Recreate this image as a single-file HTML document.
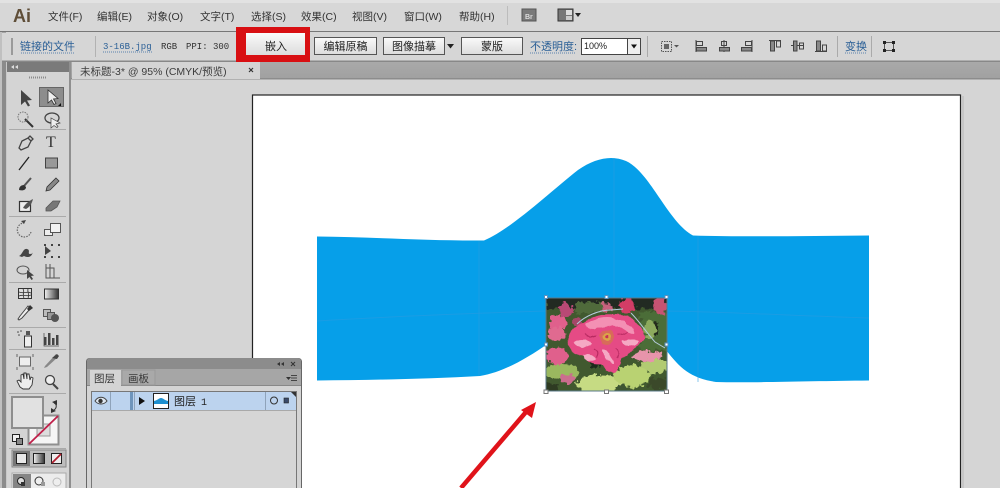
<!DOCTYPE html>
<html><head><meta charset="utf-8"><style>
html,body{margin:0;padding:0;background:#d6d6d6;overflow:hidden}
svg{display:block;font-family:"Liberation Sans","Noto Sans CJK SC",sans-serif;filter:blur(.35px)}
.m{font-size:10.5px;fill:#333}
.b{font-size:11px;fill:#222;text-anchor:middle}
.l{font-size:11px;fill:#2a5f96}
.mono{font-family:"Liberation Mono","Noto Sans CJK SC",monospace;font-size:9px;fill:#333}
.ic{fill:none;stroke:#444;stroke-width:1.3}
.f{fill:#444}
</style></head><body>
<svg width="1000" height="488" viewBox="0 0 1000 488" xmlns="http://www.w3.org/2000/svg">
<defs>
<linearGradient id="btng" x1="0" y1="0" x2="0" y2="1"><stop offset="0" stop-color="#fafafa"/><stop offset="1" stop-color="#dcdcdc"/></linearGradient>
<linearGradient id="grad" x1="0" y1="0" x2="1" y2="0"><stop offset="0" stop-color="#f4f4f4"/><stop offset="1" stop-color="#333"/></linearGradient>
<linearGradient id="tabbar" x1="0" y1="0" x2="0" y2="1"><stop offset="0" stop-color="#a9a9a9"/><stop offset="1" stop-color="#a0a0a0"/></linearGradient>
<filter id="rough" x="-5%" y="-5%" width="110%" height="110%"><feTurbulence type="fractalNoise" baseFrequency="0.22" numOctaves="2" seed="7" result="n"/><feDisplacementMap in="SourceGraphic" in2="n" scale="9" xChannelSelector="R" yChannelSelector="G"/><feGaussianBlur stdDeviation="0.35"/></filter>
<filter id="rough2" x="-5%" y="-5%" width="110%" height="110%"><feTurbulence type="fractalNoise" baseFrequency="0.12" numOctaves="2" seed="3" result="n"/><feDisplacementMap in="SourceGraphic" in2="n" scale="5" xChannelSelector="R" yChannelSelector="G"/><feGaussianBlur stdDeviation="0.3"/></filter>
<clipPath id="pic"><rect x="546" y="298" width="121" height="93"/></clipPath>
</defs>

<rect width="1000" height="488" fill="#d6d6d6"/>
<!-- top menu -->
<rect x="0" y="0" width="1000" height="3" fill="#e2e2e2"/>
<rect x="0" y="3" width="1000" height="28" fill="#d7d7d7"/>
<text x="13" y="22" font-size="18" font-weight="bold" fill="#5f4e38">Ai</text>
<g class="m">
<text x="48" y="20">文件(F)</text><text x="97" y="20">编辑(E)</text><text x="147" y="20">对象(O)</text>
<text x="200" y="20">文字(T)</text><text x="251" y="20">选择(S)</text><text x="301" y="20">效果(C)</text>
<text x="352" y="20">视图(V)</text><text x="404" y="20">窗口(W)</text><text x="459" y="20">帮助(H)</text>
</g>
<rect x="507" y="6" width="1" height="19" fill="#bcbcbc"/>
<rect x="522" y="9" width="14" height="12" fill="#7a7a7a" stroke="#555"/>
<text x="525" y="19" font-size="7" font-weight="bold" fill="#ddd">Br</text>
<rect x="558" y="9" width="15" height="12" fill="#777" stroke="#333"/>
<rect x="566" y="10" width="6" height="5" fill="#ddd"/><rect x="566" y="16" width="6" height="4" fill="#ccc"/>
<path d="M575 13h6l-3 4z" fill="#222"/>

<!-- control bar -->
<rect x="0" y="31" width="1000" height="1.500" fill="#777"/>
<rect x="6" y="32" width="994" height="29" fill="#d6d6d6"/>
<rect x="0" y="60.500" width="1000" height="1.500" fill="#888"/>
<rect x="11" y="38" width="2" height="17" fill="#9a9a9a"/>
<text x="20" y="50" class="l">链接的文件</text>
<path d="M21 53h53" stroke="#5b82ad" stroke-width="1" stroke-dasharray="1 1"/>
<rect x="95" y="36" width="1" height="21" fill="#b2b2b2"/>
<text x="103" y="49" font-size="9" fill="#2a5f96" font-family="Liberation Mono,monospace">3-16B.jpg</text>
<path d="M103 52h49" stroke="#5b82ad" stroke-dasharray="1 1"/>
<text x="161" y="49" class="mono">RGB</text>
<text x="186" y="49" class="mono">PPI: 300</text>

<rect x="236" y="27" width="74" height="35" fill="#d80f12"/>
<rect x="246" y="33" width="59" height="22" fill="url(#btng)"/>
<text x="276" y="50" class="b">嵌入</text>
<rect x="314.500" y="37.500" width="62" height="17" fill="url(#btng)" stroke="#555"/>
<text x="345.500" y="50" class="b">编辑原稿</text>
<rect x="383.500" y="37.500" width="61" height="17" fill="url(#btng)" stroke="#555"/>
<text x="414" y="50" class="b">图像描摹</text>
<path d="M447 44h7l-3.500 4.500z" fill="#222"/>
<rect x="461.500" y="37.500" width="61" height="17" fill="url(#btng)" stroke="#555"/>
<text x="492" y="50" class="b">蒙版</text>
<text x="530" y="50" class="l">不透明度:</text>
<path d="M530 53h46" stroke="#5b82ad" stroke-dasharray="1 1"/>
<rect x="581.500" y="38.500" width="46" height="16" fill="#fff" stroke="#444"/>
<text x="584" y="49" font-size="9" fill="#222">100%</text>
<rect x="627.500" y="38.500" width="13" height="16" fill="#eee" stroke="#444"/>
<path d="M631 44.500h6l-3 4z" fill="#111"/>
<rect x="647" y="36" width="1" height="21" fill="#aaa"/>
<!-- align icons -->
<rect x="661.500" y="41.500" width="10" height="10" fill="none" stroke="#555" stroke-dasharray="1.500 1"/>
<rect x="664" y="44" width="5" height="5" fill="#666"/>
<path d="M674 45h5l-2.500 2.500z" fill="#555"/>
<g fill="none" stroke="#444">
<path d="M696 40v12"/><rect x="696.500" y="41.500" width="6" height="4"/><rect x="696.500" y="47.500" width="10" height="3.500" fill="#888"/>
<path d="M724 40v12"/><rect x="721.500" y="41.500" width="5" height="4"/><rect x="719.500" y="47.500" width="10" height="3.500" fill="#888"/>
<path d="M752 40v12"/><rect x="745.500" y="41.500" width="6" height="4"/><rect x="741.500" y="47.500" width="10" height="3.500" fill="#888"/>
<path d="M769 40.500h12"/><rect x="770.500" y="41" width="4" height="10" fill="#888"/><rect x="776.500" y="41" width="4" height="6"/>
<path d="M791 45.500h13"/><rect x="793.500" y="41" width="3.500" height="10" fill="#888"/><rect x="799.500" y="43" width="4" height="6"/>
<path d="M815 51.500h12"/><rect x="816.500" y="41" width="4" height="10" fill="#888"/><rect x="822.500" y="45" width="4" height="6"/>
</g>
<rect x="837" y="36" width="1" height="21" fill="#aaa"/>
<text x="845" y="50" class="l">变换</text>
<path d="M845 53h22" stroke="#5b82ad" stroke-dasharray="1 1"/>
<rect x="871" y="36" width="1" height="21" fill="#aaa"/>
<rect x="884.500" y="42.500" width="9" height="8" fill="none" stroke="#555"/>
<g fill="#222"><rect x="883" y="41" width="3" height="3"/><rect x="892" y="41" width="3" height="3"/><rect x="883" y="49" width="3" height="3"/><rect x="892" y="49" width="3" height="3"/></g>

<!-- tab bar -->
<rect x="71" y="62" width="929" height="17" fill="url(#tabbar)"/>
<rect x="71" y="78" width="929" height="1.500" fill="#8c8c8c"/>
<rect x="72" y="62" width="188" height="17" fill="#d4d4d4"/>
<text x="80" y="75" font-size="10.500" fill="#3c3c3c">未标题-3* @ 95% (CMYK/预览)</text>
<path d="M249 68l4 4m0-4l-4 4" stroke="#333" stroke-width="1.200"/>

<!-- left edge + tool panel -->
<rect x="0" y="32" width="2" height="456" fill="#c0c0c0"/>
<rect x="2" y="62" width="4" height="426" fill="#8b8b8b"/>
<rect x="6" y="62" width="1" height="426" fill="#c8c8c8"/>
<rect x="7" y="62" width="62" height="10" fill="#7a7a7a"/>
<path d="M11 67l3-2v4zM15 67l3-2v4z" fill="#ddd"/>
<rect x="7" y="72" width="62" height="416" fill="#d4d4d4"/>
<rect x="69" y="62" width="2" height="426" fill="#8f8f8f"/>
<path d="M29 77.500h17" stroke="#8a8a8a" stroke-dasharray="1 1" stroke-width="2"/>
<g stroke="#aaa"><path d="M9 129.500h57M9 216.500h57M9 282.500h57M9 327.500h57M9 349.500h57M9 393.500h57M9 448.500h57"/></g>

<!-- selection, direct selection -->
<path d="M21 90l0 15 4-3.500 3 5 2-1-3-5 5-.5z" fill="#444"/>
<rect x="39.500" y="87.500" width="24" height="19" fill="#8d8d8d" stroke="#666"/>
<path d="M48 90l0 13 3.500-3 2.500 4.500 2-1-2.500-4.500 4.500-.5z" fill="#eee" stroke="#333" stroke-width=".8"/>
<path d="M61 103v3h-3z" fill="#111"/>
<!-- wand lasso -->
<path d="M25 119l8 8" stroke="#333" stroke-width="2"/>
<circle cx="23" cy="117" r="5" fill="none" stroke="#777" stroke-dasharray="1.500 1"/>
<ellipse cx="52" cy="118" rx="7" ry="5" fill="none" stroke="#444" stroke-width="1.300"/>
<path d="M51 118v10l3-2.500 3 2 1-1-2-2.500 4-1z" fill="#eee" stroke="#444" stroke-width=".7"/>
<!-- pen type -->
<path d="M19 148l3-7 6-3 3 3-3 6-7 3zM28 138l2-2 3 3-2 2" class="ic"/>
<text x="46" y="147" font-family="Liberation Serif,serif" font-size="16" fill="#333">T</text>
<!-- line rect -->
<path d="M19 170l10-13" stroke="#222" stroke-width="1.300"/>
<rect x="45.500" y="158" width="12" height="10" fill="#999" stroke="#444"/>
<!-- brush pencil -->
<path d="M31 178l-7 8" stroke="#555" stroke-width="2"/><path d="M19 190c0-3 2-5 5-5l2 2c0 3-3 4-7 3z" fill="#333"/>
<path d="M56 178l3 3-9 9-4 1 1-4z" fill="#888" stroke="#333" stroke-width=".8"/>
<!-- blob eraser -->
<rect x="19.500" y="201.500" width="11" height="10" fill="#eee" stroke="#333" stroke-width="1.200"/>
<path d="M23 208c2-4 6-7 10-9-1 4-3 8-7 10z" fill="#555"/>
<path d="M46 208l7-7h7l-3 6-6 4h-5z" fill="#777" stroke="#555" stroke-width=".8"/>
<!-- rotate scale -->
<path d="M31 232a7 7 0 1 1-7-9" fill="none" stroke="#666" stroke-width="1.200" stroke-dasharray="1.500 1.200"/><path d="M21 221l5-1-2 4z" fill="#444"/>
<rect x="44.500" y="229.500" width="8" height="6" fill="#eee" stroke="#555"/><rect x="50.500" y="223.500" width="10" height="9" fill="#f2f2f2" stroke="#555"/>
<!-- width, free transform -->
<path d="M19 256c4-2 4-8 8-7s0 5 3 5 3-2 3-2-1 5-5 5-3-2-6 0z" fill="#444"/>
<g class="f"><rect x="44" y="244" width="2" height="2"/><rect x="58" y="244" width="2" height="2"/><rect x="44" y="256" width="2" height="2"/><rect x="58" y="256" width="2" height="2"/><rect x="51" y="244" width="2" height="2"/><rect x="51" y="256" width="2" height="2"/></g>
<path d="M45 246l0 9 6-4z" fill="#444"/>
<!-- shape builder, perspective -->
<ellipse cx="23" cy="270" rx="6" ry="4" fill="none" stroke="#555"/>
<path d="M27 270v9l2.500-2 2 3 1.500-1-2-3 3-.5z" fill="#444"/>
<path d="M46 264v14h14M46 268h8v10M50 264v14" fill="none" stroke="#555"/>
<!-- mesh, gradient -->
<rect x="18.500" y="288.500" width="13" height="10" fill="#ddd" stroke="#333"/>
<path d="M19 292c4 2 8-1 12 1M19 296c4-2 8 1 12-1M23 289c2 3-1 6 1 9M28 289c-1 3 2 6 0 9" fill="none" stroke="#333" stroke-width=".8"/>
<rect x="44.500" y="289" width="14" height="10" fill="url(#grad)" stroke="#333"/>
<!-- eyedropper blend -->
<path d="M31 308l-3-2-8 10-2 3 1 1 3-2 8-9z" fill="#eee" stroke="#444"/><path d="M27 309l3-4 3 3-4 3z" fill="#333"/>
<rect x="43.500" y="309.500" width="7" height="7" fill="#bbb" stroke="#555"/><rect x="47.500" y="312.500" width="7" height="7" fill="#999" stroke="#555"/><circle cx="55" cy="318" r="4" fill="#555"/>
<!-- symbol spray, graph -->
<rect x="24.500" y="336" width="7" height="11" fill="#eee" stroke="#333"/>
<rect x="26" y="331" width="4" height="4" fill="#555"/><g class="f"><circle cx="18" cy="332" r=".8"/><circle cx="21" cy="331" r=".8"/><circle cx="19" cy="335" r=".8"/></g>
<g class="f"><rect x="44" y="337" width="2.500" height="8"/><rect x="48" y="333" width="2.500" height="12"/><rect x="52" y="338" width="2.500" height="7"/><rect x="56" y="335" width="2.500" height="10"/></g>
<path d="M44 333v13h15" fill="none" stroke="#444" stroke-width=".7"/>
<!-- artboard slice -->
<rect x="19.500" y="357" width="11" height="9" fill="#eee" stroke="#666"/>
<path d="M17 354v3M33 354v3M17 367v3M33 367v3" stroke="#666"/>
<path d="M45 366l-1 2 3-1 11-10-2-3z" fill="#888"/><path d="M52 358l5-4 2 2-2 3z" fill="#444"/>
<!-- hand zoom -->
<path d="M20 387l-3-6 2-1 2 2v-7l2-1 1 5v-6h2l1 6v-5h2l1 6 1-3 2 1-1 7-3 4h-6z" fill="#eee" stroke="#333" stroke-width=".9"/>
<circle cx="50" cy="380" r="4.500" fill="#eee" stroke="#444" stroke-width="1.300"/><path d="M53 384l5 5" stroke="#444" stroke-width="2"/>
<!-- fill stroke -->
<rect x="28.500" y="415.500" width="30" height="29" fill="#f5f5f5" stroke="#8f8f8f" stroke-width="2"/>
<rect x="37" y="424" width="13" height="12" fill="#ddd" stroke="#999"/>
<path d="M29 444l29-28" stroke="#c0204a" stroke-width="1.800"/>
<rect x="12" y="397" width="31" height="31" fill="#e1e1e1" stroke="#8e8e8e" stroke-width="2"/>
<path d="M52 402l5-2v5zM56 411l-5 2v-5z" fill="#333"/><path d="M54 403c3 1 3 5 0 7" fill="none" stroke="#333"/>
<rect x="12.500" y="434.500" width="7" height="7" fill="#eee" stroke="#222"/><rect x="16.500" y="438.500" width="6" height="6" fill="#888" stroke="#222"/>
<!-- mode buttons -->
<rect x="12" y="450" width="54" height="17" fill="#bdbdbd" stroke="#888"/>
<rect x="13" y="451" width="17" height="15" fill="#777"/>
<rect x="16.500" y="453.500" width="10" height="10" fill="#e8e8e8" stroke="#222"/>
<rect x="33.500" y="453.500" width="11" height="10" fill="url(#grad)" stroke="#222"/>
<rect x="51.500" y="453.500" width="10" height="10" fill="#eee" stroke="#222"/>
<path d="M52 463l9-9" stroke="#b01d2e" stroke-width="1.800"/>
<rect x="12" y="473" width="54" height="16" fill="#ececec" stroke="#aaa"/>
<rect x="13" y="474" width="18" height="15" fill="#858585"/>
<circle cx="21" cy="481" r="3.500" fill="#ddd" stroke="#222"/><rect x="21" y="482" width="4" height="4" fill="#333"/>
<circle cx="39" cy="481" r="4" fill="#eee" stroke="#333"/><rect x="41" y="482" width="4" height="4" fill="#999"/>
<circle cx="57" cy="482" r="4" fill="#eee" stroke="#bbb"/>

<!-- canvas -->
<rect x="71" y="80" width="929" height="408" fill="#d5d5d5"/>
<rect x="252.500" y="95" width="708" height="400" fill="#fff" stroke="#222" stroke-width="1.200"/>
<rect x="962" y="96" width="2" height="392" fill="#c6c6c6"/>

<!-- blue shape -->
<path d="M317 236.500C370 237 430 241 484 240.500C510 230 550 192 578 170C595 158 612 155 626 161C650 172 668 222 693 235.500C740 237 810 236 869 235.500V380.500C810 381 750 383 716 382C690 378 680 368 666 350L546 345C530 356 505 372 480 376C430 379 370 380 317 380.500Z" fill="#069fe9"/>
<path d="M479 241V376M614 158V300M698 236V382" stroke="#2b9be0" stroke-width="1" opacity=".55"/>
<path d="M317 321C400 316 480 313 546 311M667 311C730 312 800 316 869 318" stroke="#2b9be0" stroke-width="1" fill="none" opacity=".55"/>

<!-- photo -->
<g clip-path="url(#pic)">
<rect x="546" y="298" width="121" height="93" fill="#41592f"/>
<g filter="url(#rough)">
<rect x="546" y="296" width="125" height="13" fill="#232b20"/>
<rect x="575" y="303" width="30" height="10" fill="#4f6a3a"/>
<rect x="640" y="312" width="30" height="38" fill="#4c6d38"/>
<rect x="648" y="322" width="10" height="14" fill="#222c1e"/>
<ellipse cx="650" cy="330" rx="6" ry="9" fill="#8daa5d"/>
<rect x="590" y="362" width="10" height="6" fill="#1f2b1c"/>
<ellipse cx="562" cy="372" rx="18" ry="8" fill="#9ab85e"/>
<ellipse cx="600" cy="384" rx="24" ry="9" fill="#c6db83"/>
<ellipse cx="632" cy="376" rx="18" ry="11" fill="#b9d272"/>
<ellipse cx="656" cy="366" rx="14" ry="7" fill="#b2cb72"/>
<ellipse cx="658" cy="384" rx="10" ry="7" fill="#3a4a2a"/>
<ellipse cx="548" cy="388" rx="10" ry="6" fill="#2e3b24"/>
<ellipse cx="622" cy="388" rx="6" ry="3" fill="#3d5730"/>
<ellipse cx="566" cy="310" rx="7" ry="7" fill="#b84a74"/>
<ellipse cx="627" cy="306" rx="8" ry="8" fill="#d23c66"/>
<ellipse cx="660" cy="306" rx="7" ry="9" fill="#c65272"/>
<ellipse cx="607" cy="307" rx="6" ry="4" fill="#c9627e"/>
<ellipse cx="558" cy="322" rx="9" ry="7" fill="#e0608c"/>
<ellipse cx="556" cy="334" rx="9" ry="7" fill="#e06a90"/>
<ellipse cx="557" cy="356" rx="11" ry="9" fill="#e0608c"/>
<ellipse cx="577" cy="322" rx="5" ry="4" fill="#a44768"/>
<ellipse cx="647" cy="356" rx="15" ry="5" fill="#e794ab"/>
<ellipse cx="567" cy="379" rx="7" ry="5" fill="#cb6d8e"/>
</g>
<g filter="url(#rough2)">
<path d="M568 343c-2-8 8-16 16-21 10-7 20-9 30-8 12 0 24 6 28 15 3 7 3 10 0 13-5 5-10 8-14 12-3 4-8 4-8 8 0 4-3 12-7 12-5-2-8-8-13-10-8 0-12-2-14-7-8 0-16-6-18-14z" fill="#e54c85"/>
<path d="M586 324c8-6 22-9 34-4 8 4 14 9 14 14-6 0-10-6-18-8-8-1-16 1-22 3-4 0-9-1-8-5z" fill="#f390b4"/>
<path d="M574 342c6-4 14-3 18 2-2 5-13 5-18-2zM602 350c6 0 11 5 11 13-6 0-11-6-11-13zM622 342c5-3 12-4 17-2-2 6-12 9-17 2zM583 356c4-2 10-1 13 3-4 2-10 2-13-3z" fill="#f5a9c4"/>
<path d="M594 348c4 3 4 7 2 10M616 348c3 3 3 6 1 10M586 334c3 3 7 3 10 2M628 332c-3 3-7 4-11 3" stroke="#b92a62" stroke-width="1.200" fill="none"/>
<circle cx="607" cy="337" r="7" fill="#d86a5a"/><circle cx="607" cy="337" r="4" fill="#dba44a"/><circle cx="607" cy="337" r="1.800" fill="#c93056"/>
</g>
</g>
<!-- selection edges -->
<rect x="546" y="298" width="121" height="93" fill="none" stroke="#5a7a8a" stroke-width="1"/>
<path d="M577 324c8-8 22-14 34-14l12-1M631 313c8 8 16 20 24 29l10 6" stroke="#b4cbdc" fill="none" stroke-width="1"/>
<g fill="#fff" stroke="#5a8fc0" stroke-width="1">
<rect x="544.500" y="295.500" width="3" height="3"/><rect x="605" y="295.500" width="3" height="3"/><rect x="665" y="295.500" width="3" height="3"/>
<rect x="544.500" y="343" width="3" height="3"/><rect x="665" y="343" width="3" height="3"/>
<rect x="544" y="390" width="4" height="3.500" stroke="#777"/><rect x="604.500" y="390" width="4" height="3.500" stroke="#777"/><rect x="664.500" y="390" width="4" height="3.500" stroke="#777"/>
</g>

<!-- red arrow -->
<path d="M461 488L526 412" stroke="#e0131a" stroke-width="4.500" fill="none"/>
<path d="M536 402L521 410L532 418Z" fill="#e0131a"/>

<!-- layers panel -->
<rect x="86.500" y="358.500" width="215" height="140" rx="3" fill="#d4d4d4" stroke="#666"/>
<path d="M87 369v-8a3 3 0 0 1 3-3h208a3 3 0 0 1 3 3v8z" fill="#8c8c8c"/>
<path d="M277 364l3-2v4zM281 364l3-2v4z" fill="#333"/>
<path d="M291 362l4 4m0-4l-4 4" stroke="#333" stroke-width="1"/>
<rect x="87" y="369" width="214" height="16" fill="#a6a6a6"/>
<rect x="87" y="385" width="214" height="1" fill="#888"/>
<rect x="90" y="370" width="31" height="16" fill="#d4d4d4"/>
<text x="94" y="382" font-size="10.500" fill="#333">图层</text>
<rect x="122" y="370" width="33" height="15" fill="#a9a9a9" stroke="#999"/>
<text x="128" y="382" font-size="10.500" fill="#3a3a3a">画板</text>
<path d="M286 377h5l-2.500 3z" fill="#333"/><path d="M291 375.500h6M291 378h6M291 380.500h6" stroke="#444"/>
<rect x="91.500" y="391.500" width="205" height="100" fill="#d6d6d6" stroke="#777"/>
<rect x="92" y="392" width="204" height="18" fill="#bcd3ee"/>
<rect x="92" y="410" width="204" height="1" fill="#a9a9a9"/>
<path d="M110.500 392v18M265.500 392v18M134.500 392v18" stroke="#8fa3ba"/>
<rect x="130" y="392" width="3" height="18" fill="#6f95bc"/>
<path d="M95 401c3-5 9-5 12 0-3 4-9 4-12 0z" fill="#dfe8f2" stroke="#444"/><circle cx="100.500" cy="401" r="2.200" fill="#333"/>
<path d="M139 397l6 4-6 4z" fill="#111"/>
<rect x="153.500" y="393.500" width="15" height="15" fill="#fff" stroke="#222"/>
<path d="M154 401c4-1 5-3 7-3s3 2 7 3v3h-14z" fill="#1c8fd0"/>
<text x="174" y="405" font-size="11" fill="#222">图层</text><text x="201" y="405" font-size="10" fill="#222" font-family="Liberation Mono,monospace">1</text>
<circle cx="274" cy="400.500" r="3.500" fill="none" stroke="#333"/>
<rect x="284" y="398" width="4.500" height="5" fill="#3a4a6a" stroke="#222" stroke-width=".6"/>
<path d="M291 392h5v5z" fill="#333"/>
</svg>
</body></html>
